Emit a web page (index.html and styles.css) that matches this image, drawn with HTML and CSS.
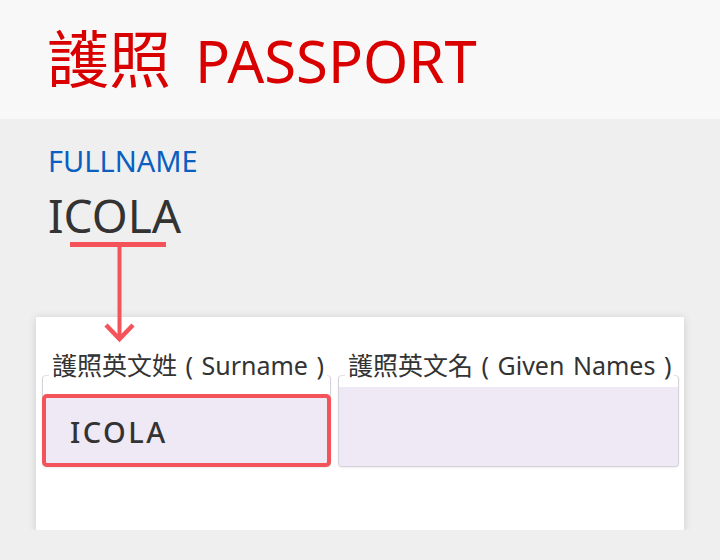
FILE: index.html
```html
<!DOCTYPE html>
<html lang="zh-Hant">
    <head>
        <meta charset="UTF-8">
        <meta name="viewport" content="width=device-width, initial-scale=1.0">
        <title>護照 PASSPORT</title>
        <link rel="stylesheet" href="styles.css">
    </head>
    <body>
        <header class="top">
            <h1 class="title"><span class="title-zh">護照</span><span class="title-en">PASSPORT</span></h1>
        </header>
        <main class="content">
            <div class="fullname">
                <div class="fullname-label">FULLNAME</div>
                <div class="fullname-value">ICOLA</div>
            </div>
            <!-- annotation arrow: from the fullname down to the surname field -->
            <svg class="arrow" width="100" height="104" viewBox="0 0 100 104">
                <path d="M0 3.5 H96" stroke="#f4535a" stroke-width="5" fill="none"/>
                <path d="M49.5 3 V98" stroke="#f4535a" stroke-width="4" fill="none"/>
                <path d="M36 84 L49.5 98 L63 84" stroke="#f4535a" stroke-width="4.5" fill="none"/>
            </svg>
            <section class="card">
                <div class="field">
                    <div class="field-label">護照英文姓 ( Surname )</div>
                    <div class="field-box highlight">ICOLA</div>
                </div>
                <div class="field">
                    <div class="field-label">護照英文名 ( Given Names )</div>
                    <div class="field-box"></div>
                </div>
            </section>
        </main>
    </body>
</html>
```

FILE: styles.css
```css
body {
    margin: 0;
    font-family: "Noto Sans", "Noto Sans CJK TC", sans-serif;
    background-color: #f0eff0;
    color: #333;
}
.top {
    height: 119px;
    background-color: #f8f8f8;
    display: flex;
    align-items: center;
    padding-left: 47px;
}
.title {
    margin: 0;
    display: flex;
    align-items: baseline;
    gap: 24px;
    font-weight: 400;
    line-height: 62px;
    color: #d90000;
}
.title-zh {
    font-size: 62px;
}
.title-en {
    font-size: 58px;
}
.content {
    position: relative;
    padding: 24px 36px 0;
}
.fullname {
    padding-left: 12px;
}
.fullname-label {
    font-size: 29px;
    line-height: 36px;
    color: #0a5fc0;
}
.fullname-value {
    margin-top: 8px;
    font-size: 46px;
    line-height: 56px;
    color: #333;
}
.arrow {
    position: absolute;
    left: 70px;
    top: 122px;
}
.card {
    margin-top: 74px;
    height: 213px;
    background-color: #fff;
    box-shadow: 0 1px 8px rgba(0, 0, 0, 0.15);
    padding: 30px 5px 0 6px;
    display: grid;
    grid-template-columns: 289px 1fr;
    gap: 7px;
    align-items: start;
    box-sizing: border-box;
}
.field {
    display: flex;
    flex-direction: column;
}
.field-label {
    position: relative;
    z-index: 1;
    align-self: flex-start;
    margin-left: 7px;
    padding: 0 3px;
    background-color: #fff;
    font-size: 25px;
    line-height: 36px;
    word-spacing: 2px;
    white-space: nowrap;
    color: #333;
}
.field-box {
    margin-top: -8px;
    height: 92px;
    box-sizing: border-box;
    border: 1px solid #d6d2da;
    border-top-color: #e4e0e8;
    border-radius: 4px;
    background: linear-gradient(#fff 11px, #efe9f5 11px);
    box-shadow: 0 1px 2px rgba(0, 0, 0, 0.08);
}
.highlight {
    position: relative;
    background: linear-gradient(#fff 18px, #efe9f5 18px);
    padding: 36px 0 0 27px;
    font-size: 29px;
    font-weight: 500;
    letter-spacing: 2.5px;
    line-height: 40px;
}
.highlight::after {
    content: "";
    position: absolute;
    left: -1px;
    right: -1px;
    top: 18px;
    bottom: -1px;
    border: 4px solid #f4535a;
    border-radius: 5px;
}
```
